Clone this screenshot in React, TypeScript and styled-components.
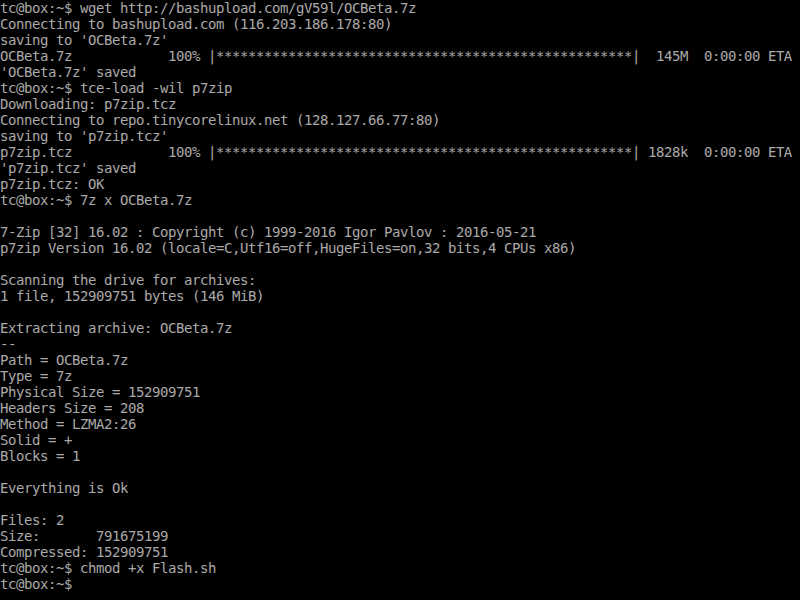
import React from "react";
import styled, { createGlobalStyle } from "styled-components";

const Global = createGlobalStyle`
  html, body {
    margin: 0;
    padding: 0;
    background: #000;
  }
`;

const Screen = styled.div`
  width: 800px;
  height: 600px;
  background: #000;
  color: #aaaaaa;
  font-family: "DejaVu Sans Mono", "Liberation Mono", monospace;
  font-size: 14px;
  letter-spacing: -0.43px;
  overflow: hidden;
`;

const Line = styled.div`
  height: 16px;
  line-height: 16px;
  white-space: pre;
`;

const stars = "*".repeat(52);

const lines: string[] = [
  "tc@box:~$ wget http://bashupload.com/gV59l/OCBeta.7z",
  "Connecting to bashupload.com (116.203.186.178:80)",
  "saving to 'OCBeta.7z'",
  `OCBeta.7z            100% |${stars}|  145M  0:00:00 ETA`,
  "'OCBeta.7z' saved",
  "tc@box:~$ tce-load -wil p7zip",
  "Downloading: p7zip.tcz",
  "Connecting to repo.tinycorelinux.net (128.127.66.77:80)",
  "saving to 'p7zip.tcz'",
  `p7zip.tcz            100% |${stars}| 1828k  0:00:00 ETA`,
  "'p7zip.tcz' saved",
  "p7zip.tcz: OK",
  "tc@box:~$ 7z x OCBeta.7z",
  "",
  "7-Zip [32] 16.02 : Copyright (c) 1999-2016 Igor Pavlov : 2016-05-21",
  "p7zip Version 16.02 (locale=C,Utf16=off,HugeFiles=on,32 bits,4 CPUs x86)",
  "",
  "Scanning the drive for archives:",
  "1 file, 152909751 bytes (146 MiB)",
  "",
  "Extracting archive: OCBeta.7z",
  "--",
  "Path = OCBeta.7z",
  "Type = 7z",
  "Physical Size = 152909751",
  "Headers Size = 208",
  "Method = LZMA2:26",
  "Solid = +",
  "Blocks = 1",
  "",
  "Everything is Ok",
  "",
  "Files: 2",
  "Size:       791675199",
  "Compressed: 152909751",
  "tc@box:~$ chmod +x Flash.sh",
  "tc@box:~$ ",
];

export default function App() {
  return (
    <>
      <Global />
      <Screen>
        {lines.map((l, i) => (
          <Line key={i}>{l}</Line>
        ))}
      </Screen>
    </>
  );
}
